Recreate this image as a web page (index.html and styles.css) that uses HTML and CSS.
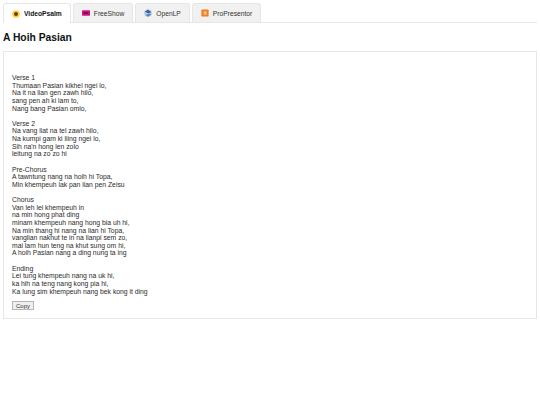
FILE: index.html
```html
<!DOCTYPE html>
<html lang="en">

<head>
  <title>A Hoih Pasian</title>
  <link rel="stylesheet" href="styles.css">
</head>

<body>

  <div class="tabs">
    <div class="tab active">
      <svg class="tab-icon" viewBox="0 0 10 10">
        <circle cx="5" cy="5" r="4.8" fill="#f9d53a"/>
        <circle cx="5" cy="5" r="2.4" fill="#6b3410"/>
      </svg>
      VideoPsalm
    </div>
    <div class="tab">
      <svg class="tab-icon" viewBox="0 0 10 7">
        <rect width="10" height="7" rx="0.6" fill="#d6127e"/>
        <rect x="2" y="2.6" width="6" height="2" fill="#5c1048"/>
      </svg>
      FreeShow
    </div>
    <div class="tab">
      <svg class="tab-icon" viewBox="0 0 10 10">
        <circle cx="5" cy="5" r="4.8" fill="#b4cbe4"/>
        <path d="M1 3.5 L5 0.8 L9.2 4 L5.5 5.4 Z" fill="#2f5f9e"/>
        <path d="M2 7.4 L6 5.6 L9.2 6.8 L5 9.6 Z" fill="#5f86b8"/>
      </svg>
      OpenLP
    </div>
    <div class="tab">
      <svg class="tab-icon" viewBox="0 0 10 10">
        <rect x="0.5" y="0.5" width="9" height="9" rx="1.2" fill="#ee7f22"/>
        <rect x="3.4" y="3" width="3.6" height="4" fill="#f9c98f"/>
      </svg>
      ProPresentor
    </div>
  </div>

  <h1 class="title">A Hoih Pasian</h1>

  <div class="card">
    <pre class="lyrics">Verse 1
Thumaan Pasian kikhel ngei lo,
Na it na lian gen zawh hilo,
sang pen ah ki lam to,
Nang bang Pasian omlo,

Verse 2
Na vang liat na tel zawh hilo,
Na kumpi gam ki liing ngei lo,
Sih na'n hong len zolo
leitung na zo zo hi

Pre-Chorus
A tawntung nang na hoih hi Topa,
Min khempeuh lak pan lian pen Zeisu

Chorus
Van leh lei khempeuh in
na min hong phat ding
minam khempeuh nang hong bia uh hi,
Na min thang hi nang na lian hi Topa,
vanglian nakhut te in na lianpi sem zo,
mai lam hun teng na khut sung om hi,
A hoih Pasian nang a ding nung ta ing

Ending
Lei tung khempeuh nang na uk hi,
ka hih na teng nang kong pia hi,
Ka lung sim khempeuh nang bek kong it ding</pre>
    <button class="copy-btn">Copy</button>
  </div>

</body>

</html>
```

FILE: styles.css
```css
body {
  margin: 0;
  padding: 3px 3px 0;
  color: #222;
  background-color: white;
  font-family: "Liberation Sans", Arial, sans-serif;
}

.tabs {
  display: flex;
  gap: 2px;
  height: 19px;
  border-bottom: 1px solid #e6e6e6;
}

.tab {
  display: flex;
  align-items: center;
  gap: 4px;
  height: 19px;
  padding: 0 8px;
  box-sizing: border-box;
  font-size: 6.7px;
  color: #333;
  background-color: #f1f1f1;
  border: 1px solid #e6e6e6;
  border-bottom: none;
  border-radius: 3px 3px 0 0;
}

.tab.active {
  height: 20px;
  color: #111;
  font-weight: bold;
  background-color: white;
}

.tab-icon {
  width: 8px;
  height: 8px;
}

.title {
  margin: 8px 0 7px;
  font-size: 10.3px;
  line-height: 13px;
  color: #111;
}

.card {
  padding: 22px 8px 8px;
  border: 1px solid #e6e6e6;
}

.lyrics {
  margin: 0;
  font-family: inherit;
  font-size: 6.8px;
  line-height: 7.62px;
  color: #2a2a2a;
}

.copy-btn {
  display: block;
  margin-top: 6px;
  padding: 0 3px;
  height: 9px;
  font-family: inherit;
  font-size: 6px;
  line-height: 6px;
  color: #333;
  background-color: #efefef;
  border: 1px solid #b5b5b5;
}
```
